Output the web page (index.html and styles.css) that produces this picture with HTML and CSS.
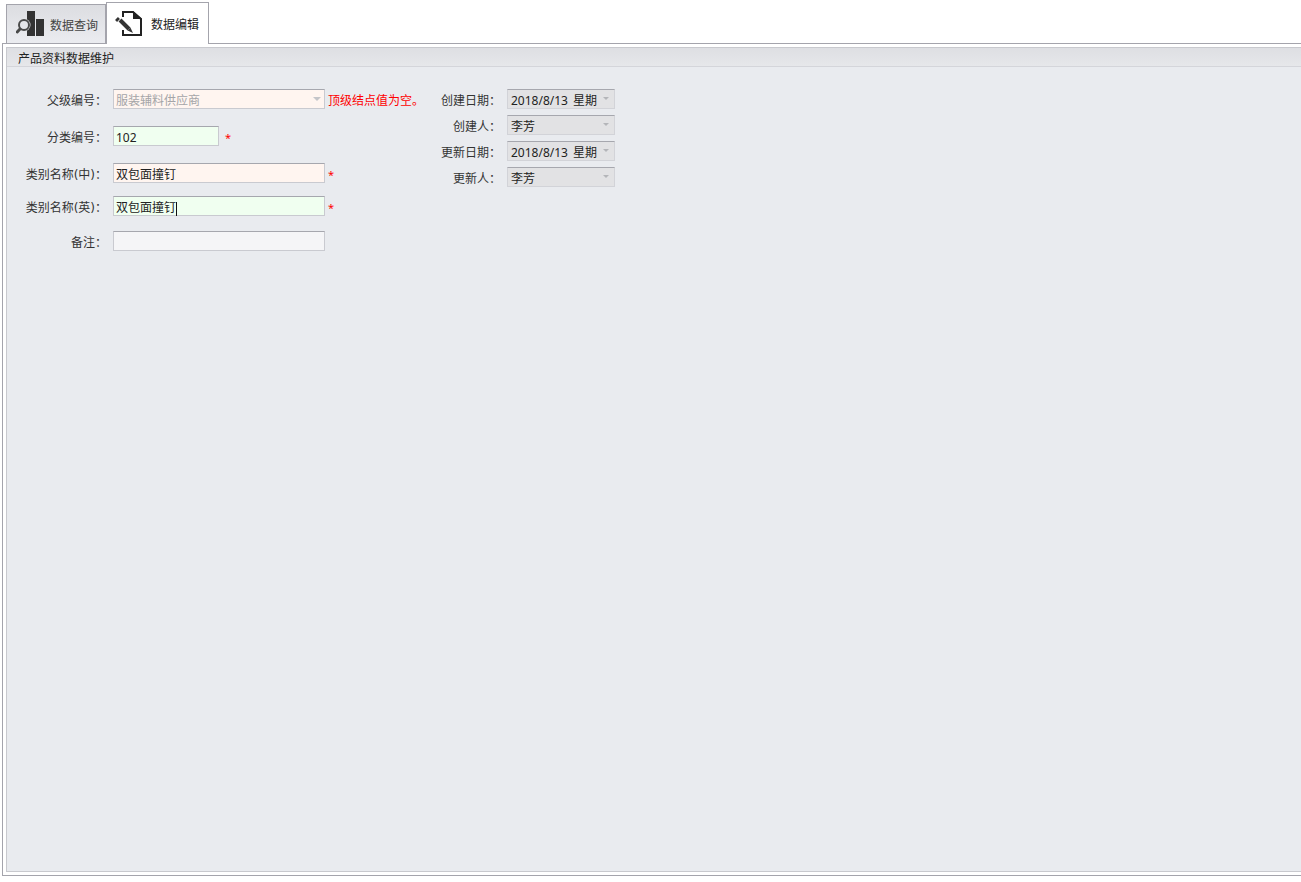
FILE: index.html
```html
<!DOCTYPE html>
<html lang="zh-CN">
<head>
    <meta charset="UTF-8">
    <title>产品资料数据维护</title>
    <link rel="stylesheet" href="styles.css">
</head>
<body>
    <!-- Tabs -->
    <div class="tabs">
        <div class="tab">
            <svg class="tab-icon" width="30" height="28" viewBox="0 0 30 28">
                <rect x="11" y="0" width="8" height="25" fill="#333"/>
                <rect x="20" y="8" width="8" height="17" fill="#333"/>
                <circle cx="8" cy="14" r="6.5" fill="#e4e5e9"/>
                <circle cx="8" cy="14" r="5" fill="#e4e5e9" stroke="#4a4a4a" stroke-width="2"/>
                <path d="M4 18 L1.2 21" stroke="#4a4a4a" stroke-width="3" stroke-linecap="round"/>
            </svg>
            <span>数据查询</span>
        </div>
        <div class="tab tab-active">
            <svg class="tab-icon" width="28" height="28" viewBox="0 0 28 28">
                <path d="M8 7 V2 H18 L26 9 V25 H8 V20" fill="none" stroke="#222" stroke-width="2"/>
                <path d="M18 1 L27 9 H18 Z" fill="#222"/>
                <path d="M1.5 8.5 L3.5 10.5" stroke="#333" stroke-width="4"/>
                <path d="M5 10 L14 19" stroke="#333" stroke-width="4"/>
                <path d="M15.4 17.6 L12.6 20.4 L18 23 Z" fill="#333"/>
            </svg>
            <span>数据编辑</span>
        </div>
    </div>

    <div class="page">
        <div class="panel">
            <div class="panel-title">产品资料数据维护</div>
            <div class="panel-body">
                <!-- 左边 -->
                <div class="form-left">
                    <div class="row">
                        <label>父级编号：</label>
                        <div class="field wide peach disabled">服装辅料供应商<i class="arrow"></i></div>
                        <span class="hint">顶级结点值为空。</span>
                    </div>
                    <div class="row">
                        <label>分类编号：</label>
                        <div class="field short green">102</div>
                        <span class="star star-short">*</span>
                    </div>
                    <div class="row">
                        <label>类别名称(中)：</label>
                        <div class="field wide peach">双包面撞钉</div>
                        <span class="star">*</span>
                    </div>
                    <div class="row row-tight">
                        <label>类别名称(英)：</label>
                        <div class="field wide green">双包面撞钉<span class="caret"></span></div>
                        <span class="star">*</span>
                    </div>
                    <div class="row row-mid">
                        <label>备注：</label>
                        <div class="field wide grey"></div>
                    </div>
                </div>
                <!-- 右边 -->
                <div class="form-right">
                    <div class="row-r">
                        <label>创建日期：</label>
                        <div class="combo"><span>2018/8/13 星期</span><i class="arrow"></i></div>
                    </div>
                    <div class="row-r">
                        <label>创建人：</label>
                        <div class="combo"><span>李芳</span><i class="arrow"></i></div>
                    </div>
                    <div class="row-r">
                        <label>更新日期：</label>
                        <div class="combo"><span>2018/8/13 星期</span><i class="arrow"></i></div>
                    </div>
                    <div class="row-r">
                        <label>更新人：</label>
                        <div class="combo"><span>李芳</span><i class="arrow"></i></div>
                    </div>
                </div>
            </div>
        </div>
    </div>
</body>
</html>
```

FILE: styles.css
```css
* {
    margin: 0;
    padding: 0;
    box-sizing: border-box;
}

body {
    display: flex;
    flex-direction: column;
    height: 100vh;
    background: white;
    font-family: "Noto Sans", "Noto Sans CJK SC", sans-serif;
    font-size: 12px;
    color: #333;
    overflow: hidden;
}

/* Tabs */
.tabs {
    display: flex;
    align-items: flex-end;
    height: 43px;
    padding-left: 6px;
}

.tab {
    display: flex;
    align-items: center;
    width: 100px;
    height: 39px;
    padding: 2px 0 0 9px;
    background: linear-gradient(to bottom, #dcdde1, #ebecf0);
    border: 1px solid #a4a4ac;
    border-bottom: none;
    color: #444;
}

.tab-icon {
    flex: none;
    margin-right: 4px;
}

.tab-active {
    position: relative;
    width: 103px;
    height: 42px;
    margin-bottom: -1px;
    padding: 0 0 0 8px;
    background: white;
    color: #222;
}

.tab-active .tab-icon {
    margin-right: 8px;
}

/* Panel */
.page {
    flex: 1;
    display: flex;
    margin: 0 0 6px 2px;
    padding: 3px 0 3px 3px;
    border: 1px solid #a4a4ac;
    border-right: none;
}

.panel {
    flex: 1;
    display: flex;
    flex-direction: column;
    border: 1px solid #c8c9ce;
    border-right: none;
}

.panel-title {
    height: 19px;
    padding-left: 11px;
    line-height: 21px;
    background: linear-gradient(to bottom, #dedfe3, #e6e7ea);
    border-bottom: 1px solid #d4d5da;
    color: #222;
}

.panel-body {
    flex: 1;
    display: flex;
    background: #e9ebef;
}

/* Form */
.form-left {
    width: 396px;
    padding-top: 22px;
}

.row {
    display: flex;
    align-items: center;
    height: 20px;
    margin-bottom: 17px;
}

.row-tight {
    margin-top: -4px;
    margin-bottom: 15px;
}

label {
    flex: none;
    width: 100px;
    margin-right: 6px;
    font-family: "DejaVu Sans", "Noto Sans CJK SC", sans-serif;
    text-align: right;
}

.field {
    flex: none;
    position: relative;
    height: 20px;
    padding-left: 2px;
    line-height: 22px;
    border: 1px solid #c9cad0;
    border-top-color: #a6a7ae;
    color: #222;
    white-space: nowrap;
}

.wide {
    width: 212px;
}

.short {
    width: 106px;
}

.peach {
    background: #fff5f0;
}

.green {
    background: #f0fff0;
}

.grey {
    background: #f5f5f7;
}

.disabled {
    color: #a5a5a8;
}

.caret {
    display: inline-block;
    width: 1px;
    height: 14px;
    vertical-align: middle;
    background: #111;
}

.arrow {
    position: absolute;
    top: 7px;
    right: 3px;
    width: 0;
    height: 0;
    border: 4px solid transparent;
    border-top-color: #c4c5c9;
    border-bottom: none;
}

.hint {
    margin-left: 3px;
    padding-top: 2px;
    color: #f00;
    white-space: nowrap;
}

.star {
    margin-left: 3px;
    padding-top: 3px;
    font-size: 11px;
    color: #f00;
}

.star-short {
    margin-left: 6px;
}

.form-right {
    display: flex;
    flex-direction: column;
    gap: 6px;
    padding-top: 22px;
}

.row-r {
    display: flex;
    align-items: center;
    height: 20px;
}

.row-r label {
    width: 98px;
    margin-right: 6px;
}

.combo {
    position: relative;
    width: 108px;
    height: 20px;
    padding-left: 3px;
    line-height: 22px;
    background: #e2e2e4;
    border: 1px solid #d2d3d8;
    border-top-color: #a6a7ae;
    color: #222;
    overflow: hidden;
}

.combo span {
    display: block;
    width: 86px;
    overflow: hidden;
    word-spacing: 2px;
    white-space: nowrap;
}

.combo .arrow {
    right: 5px;
    border-width: 3px;
    border-bottom: none;
    border-top-color: #b4b5b9;
}
```
